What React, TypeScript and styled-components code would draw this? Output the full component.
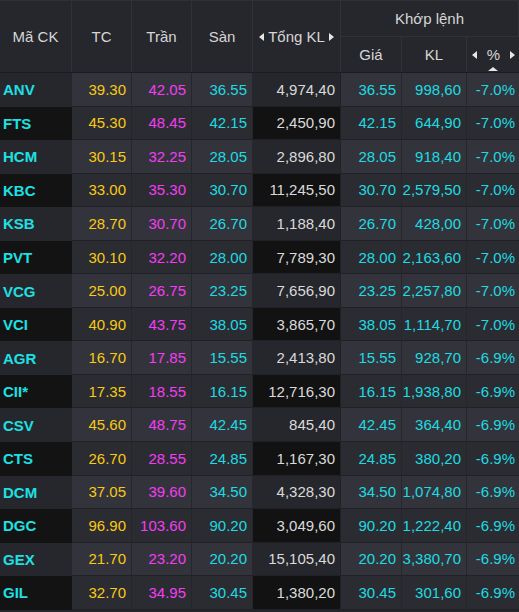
import React from "react";
import styled, { createGlobalStyle } from "styled-components";

const GlobalStyle = createGlobalStyle`
  html, body {
    margin: 0;
    padding: 0;
    background: #25262b;
    overflow: hidden;
  }
  body {
    font-family: "Liberation Sans", Arial, sans-serif;
  }
`;

const COLS = "72px 60px 60px 61px 88px 61px 65px 1fr";

const Table = styled.div`
  width: 519px;
  display: flex;
  flex-direction: column;
  font-family: "Liberation Sans", Arial, sans-serif;
  font-size: 15px;
`;

const Header = styled.div`
  display: grid;
  grid-template-columns: ${COLS};
  grid-template-rows: 36px 35px;
  background: #26272c;
  border-top: 1px solid #2f3035;
  border-bottom: 1px solid #1b1c1f;
  color: #d6d6d6;
`;

const HeadCell = styled.div<{ $span?: boolean; $wide?: boolean; $spread?: boolean }>`
  display: flex;
  align-items: center;
  justify-content: ${(p) => (p.$spread ? "space-between" : "center")};
  padding: ${(p) => (p.$spread ? "0 4px 0 5px" : "0")};
  gap: 4px;
  position: relative;
  border-right: 1px solid #313237;
  ${(p) => (p.$span ? "grid-row: 1 / span 2;" : "")}
  ${(p) => (p.$wide ? "grid-column: 6 / span 3; border-bottom: 1px solid #313237;" : "")}
  &:last-child {
    border-right: none;
  }
`;

const SortMark = styled.svg`
  position: absolute;
  left: 50%;
  bottom: 1px;
  transform: translateX(-50%);
`;

const Caret = ({ dir }: { dir: "left" | "right" }) => (
  <svg width="5" height="8" viewBox="0 0 5 8">
    {dir === "left" ? (
      <polygon points="5,0 5,8 0,4" fill="#e6e6e6" />
    ) : (
      <polygon points="0,0 0,8 5,4" fill="#e6e6e6" />
    )}
  </svg>
);

const Row = styled.div<{ $odd: boolean }>`
  display: grid;
  grid-template-columns: ${COLS};
  height: 33.56px;
  box-sizing: border-box;
  background: ${(p) => (p.$odd ? "#2b2c32" : "#33343b")};
  border-bottom: 1px solid #202126;
`;

const SymbolCell = styled.div<{ $odd: boolean }>`
  display: flex;
  align-items: center;
  padding-left: 3px;
  margin-bottom: -1px;
  background: ${(p) => (p.$odd ? "#131313" : "#26272c")};
  color: #1ee0e4;
  font-weight: bold;
  font-size: 15px;
`;

const NumCell = styled.div<{ $color: string }>`
  display: flex;
  align-items: center;
  justify-content: flex-end;
  padding-right: 5px;
  border-right: 1px solid #26272c;
  color: ${(p) => p.$color};
  &:last-child {
    border-right: none;
    padding-right: 4px;
  }
`;

const VolumeCell = styled(NumCell)<{ $odd: boolean }>`
  background: ${(p) => (p.$odd ? "#121212" : "#26272c")};
  border-right-color: #202126;
`;

const YELLOW = "#f9c913";
const MAGENTA = "#f43cf4";
const CYAN = "#1ddbe2";
const GRAY = "#dadada";

type StockRow = [string, string, string, string, string, string, string, string];

const rows: StockRow[] = [
  ["ANV", "39.30", "42.05", "36.55", "4,974,40", "36.55", "998,60", "-7.0%"],
  ["FTS", "45.30", "48.45", "42.15", "2,450,90", "42.15", "644,90", "-7.0%"],
  ["HCM", "30.15", "32.25", "28.05", "2,896,80", "28.05", "918,40", "-7.0%"],
  ["KBC", "33.00", "35.30", "30.70", "11,245,50", "30.70", "2,579,50", "-7.0%"],
  ["KSB", "28.70", "30.70", "26.70", "1,188,40", "26.70", "428,00", "-7.0%"],
  ["PVT", "30.10", "32.20", "28.00", "7,789,30", "28.00", "2,163,60", "-7.0%"],
  ["VCG", "25.00", "26.75", "23.25", "7,656,90", "23.25", "2,257,80", "-7.0%"],
  ["VCI", "40.90", "43.75", "38.05", "3,865,70", "38.05", "1,114,70", "-7.0%"],
  ["AGR", "16.70", "17.85", "15.55", "2,413,80", "15.55", "928,70", "-6.9%"],
  ["CII*", "17.35", "18.55", "16.15", "12,716,30", "16.15", "1,938,80", "-6.9%"],
  ["CSV", "45.60", "48.75", "42.45", "845,40", "42.45", "364,40", "-6.9%"],
  ["CTS", "26.70", "28.55", "24.85", "1,167,30", "24.85", "380,20", "-6.9%"],
  ["DCM", "37.05", "39.60", "34.50", "4,328,30", "34.50", "1,074,80", "-6.9%"],
  ["DGC", "96.90", "103.60", "90.20", "3,049,60", "90.20", "1,222,40", "-6.9%"],
  ["GEX", "21.70", "23.20", "20.20", "15,105,40", "20.20", "3,380,70", "-6.9%"],
  ["GIL", "32.70", "34.95", "30.45", "1,380,20", "30.45", "301,60", "-6.9%"],
];

export default function App() {
  return (
    <>
      <GlobalStyle />
      <Table>
        <Header>
          <HeadCell $span>Mã CK</HeadCell>
          <HeadCell $span>TC</HeadCell>
          <HeadCell $span>Trần</HeadCell>
          <HeadCell $span>Sàn</HeadCell>
          <HeadCell $span>
            <Caret dir="left" />
            <span>Tổng KL</span>
            <Caret dir="right" />
          </HeadCell>
          <HeadCell $wide>Khớp lệnh</HeadCell>
          <HeadCell>Giá</HeadCell>
          <HeadCell>KL</HeadCell>
          <HeadCell $spread>
            <Caret dir="left" />
            <span>%</span>
            <Caret dir="right" />
            <SortMark width="10" height="4" viewBox="0 0 10 4">
              <polygon points="0,4 10,4 5,0" fill="#e6e6e6" />
            </SortMark>
          </HeadCell>
        </Header>
        {rows.map((r, i) => {
          const odd = i % 2 === 1;
          return (
            <Row key={r[0]} $odd={odd}>
              <SymbolCell $odd={odd}>{r[0]}</SymbolCell>
              <NumCell $color={YELLOW}>{r[1]}</NumCell>
              <NumCell $color={MAGENTA}>{r[2]}</NumCell>
              <NumCell $color={CYAN}>{r[3]}</NumCell>
              <VolumeCell $odd={odd} $color={GRAY}>{r[4]}</VolumeCell>
              <NumCell $color={CYAN}>{r[5]}</NumCell>
              <NumCell $color={CYAN}>{r[6]}</NumCell>
              <NumCell $color={CYAN}>{r[7]}</NumCell>
            </Row>
          );
        })}
      </Table>
    </>
  );
}
